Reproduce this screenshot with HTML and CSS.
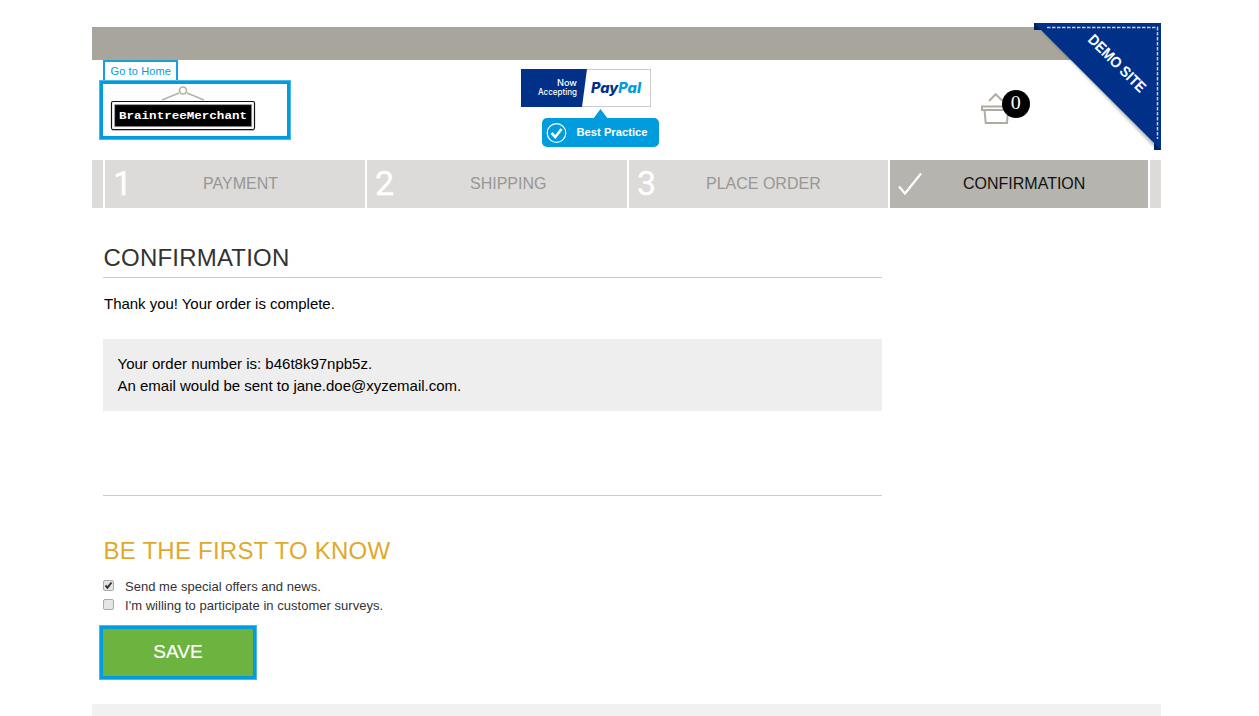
FILE: index.html
```html
<!DOCTYPE html>
<html lang="en">
<head>
<meta charset="utf-8">
<title>Confirmation</title>
<link rel="stylesheet" href="styles.css">
</head>
<body>
<div class="page">
  <div class="topbar"></div>
  <header class="header">
    <div class="brand">
      <a class="home-tag">Go to Home</a>
      <a class="logo">
        <svg width="146" height="47" viewBox="0 0 146 47">
          <g fill="none" stroke="#b3b2aa" stroke-width="1.5"><circle cx="73" cy="5.500" r="3.5" stroke-width="1.7"/><path d="M69 8 52 15M77 8 94 15"/></g>
          <rect x="1.5" y="16.500" width="143" height="28" rx="1.5" fill="#fff" stroke="#111" stroke-width="1.2"/>
          <path d="M2 45.500H144" stroke="#aaa" stroke-width=".8"/>
          <rect x="4.7" y="19.700" width="137" height="22" fill="#000" stroke="#999" stroke-width=".8"/>
          <text x="9" y="33.500" class="logo-text" textLength="128" lengthAdjust="spacingAndGlyphs">BraintreeMerchant</text>
        </svg>
      </a>
    </div>
    <div class="accept">
      <svg width="138" height="80" viewBox="0 0 138 80">
        <rect x=".5" y=".5" width="129" height="37" fill="#fff" stroke="#ccc"/>
        <path d="M0 0H66L61 38H0Z" fill="#003087"/>
        <text x="36" y="17" class="accept-text" textLength="20" lengthAdjust="spacingAndGlyphs">Now</text>
        <text x="17" y="26" class="accept-text" textLength="39" lengthAdjust="spacingAndGlyphs">Accepting</text>
        <text x="70" y="24" class="paypal" textLength="50" lengthAdjust="spacingAndGlyphs"><tspan fill="#003087">Pay</tspan><tspan fill="#009cde">Pal</tspan></text>
        <rect x="21" y="49" width="117" height="29" rx="5" fill="#009cde"/>
        <path d="M72 50 79.5 40 87 50Z" fill="#009cde"/>
        <circle cx="35.5" cy="64" r="9.3" fill="none" stroke="#fff" stroke-width="1.2"/>
        <path d="M30.5 64 34.3 68 40.5 60" fill="none" stroke="#fff" stroke-width="2.6"/>
        <text x="55.5" y="67" class="best" textLength="71" lengthAdjust="spacingAndGlyphs">Best Practice</text>
      </svg>
    </div>
    <div class="cart">
      <svg width="50" height="36" viewBox="0 0 50 36">
        <g fill="none" stroke="#b0aca5" stroke-width="2"><path d="M9 12 15.7 5.2 22 11.500M2 17.5H30V21H2ZM4.5 21 5.7 34H27L28 21"/></g>
        <circle cx="36" cy="15" r="14" fill="#000"/>
        <text x="30.700" y="20" class="count" textLength="10" lengthAdjust="spacingAndGlyphs">0</text>
      </svg>
    </div>
  </header>
  <svg class="ribbon" width="132" height="134" viewBox="0 0 132 134">
    <defs><filter id="soft" x="-10%" y="-10%" width="120%" height="120%"><feGaussianBlur stdDeviation="1.5"/></filter></defs>
    <path d="M9 9 121 125 126 119 20 7Z" fill="#000" opacity=".25" filter="url(#soft)"/>
    <path d="M1 1H10V8H1ZM121 118H128V128H121Z" fill="#00205f"/>
    <path d="M1 1H128V128Z" fill="#003087"/>
    <path d="M14 5.5H124.500V117" fill="none" stroke="#c3cbe0" stroke-width="1.5" stroke-dasharray="3.500 1.500"/>
    <text class="ribbon-text" transform="translate(54 18.500) rotate(45)" textLength="75" lengthAdjust="spacingAndGlyphs">DEMO SITE</text>
  </svg>
  <nav class="steps">
    <div class="edge"></div>
    <div class="step"><b>1</b><span class="s1">PAYMENT</span></div>
    <div class="step"><b>2</b><span class="s2">SHIPPING</span></div>
    <div class="step"><b>3</b><span class="s3">PLACE ORDER</span></div>
    <div class="step active"><svg width="26" height="26" viewBox="0 0 26 26"><path d="M1 14.500 7 21.500 23 1.500" fill="none" stroke="#fff" stroke-width="2.200"/></svg><span class="s4">CONFIRMATION</span></div>
    <div class="edge"></div>
  </nav>
  <main class="content">
    <h1 class="title">CONFIRMATION</h1>
    <p class="thanks">Thank you! Your order is complete.</p>
    <div class="order"><div class="order-no">Your order number is: b46t8k97npb5z.</div><div class="order-mail">An email would be sent to jane.doe@xyzemail.com.</div></div>
    <h2 class="subtitle">BE THE FIRST TO KNOW</h2>
    <div class="option"><span class="box"><svg width="9" height="9" viewBox="0 0 9 9"><path d="M1.500 4.500 3.500 6.700 7.500 1.500" fill="none" stroke="#333" stroke-width="1.900"/></svg></span><span class="o1">Send me special offers and news.</span></div>
    <div class="option"><span class="box"></span><span class="o2">I'm willing to participate in customer surveys.</span></div>
    <div class="save">SAVE</div>
  </main>
  <footer class="footer"></footer>
</div>
</body>
</html>
```
FILE: styles.css
```css
* { box-sizing: border-box; }
body { margin: 0; background: #fff; font-family: "Liberation Sans", Arial, sans-serif; color: #000; overflow: hidden; }
.page { position: relative; width: 1069px; height: 716px; margin-left: 92px; padding-top: 27px; display: flex; flex-direction: column; }
.topbar { height: 33px; background: #a8a59d; }
.header { height: 100px; display: flex; }
.brand { width: 192px; margin-left: 7px; }
.home-tag { display: block; width: 75px; height: 22px; margin-left: 4px; border: 2px solid #1a9fdc; border-bottom: 0; font-size: 11px; letter-spacing: .13px; line-height: 19px; padding-left: 5.500px; color: #009cde; white-space: nowrap; }
.logo { display: block; width: 192px; height: 60px; margin-top: -2px; border: 4px solid #009cde; outline: 1px solid #4db8e6; outline-offset: -1px; padding: 1px 0 0 7px; }
.logo svg { display: block; }
.logo-text { font: bold 10.800px "Liberation Mono", monospace; fill: #fff; }
.accept { margin: 9px 0 0 230px; }
.accept-text { font: 500 8.500px Inter, sans-serif; fill: #fff; }
.paypal { font: italic 800 14.500px Inter, sans-serif; }
.best { font: bold 11px "Liberation Sans", sans-serif; fill: #fff; }
.cart { margin: 29px 0 0 321px; }
.count { font: 18px "Liberation Serif", serif; fill: #fff; }
.ribbon { position: absolute; left: 941px; top: 22px; }
.ribbon-text { font: bold 15px "Liberation Sans", sans-serif; fill: #fff; }
.steps { height: 48px; display: grid; grid-template-columns: 11px 260px 260px 259px 258px 11px; column-gap: 2px; }
.edge, .step { background: #dcdbd9; }
.step { display: flex; color: #989795; font-size: 16px; line-height: 47px; white-space: nowrap; }
.step b { width: 26px; margin-left: 8px; color: #fff; font-family: Roboto, sans-serif; font-size: 34px; font-weight: 400; line-height: 46px; -webkit-text-stroke: .3px #fff; }
.step.active { background: #b5b4ae; color: #111; }
.step svg { margin: 12px 0 0 8px; }
.s1 { margin-left: 64px; }
.s2 { margin-left: 69px; }
.s3 { margin-left: 43px; }
.s4 { margin-left: 39px; }
.content { width: 779px; margin-left: 11px; height: 496px; }
.title { height: 70px; margin: 0; padding: 35px 0 0 .500px; font-size: 24px; letter-spacing: .2px; line-height: 30px; font-weight: 400; color: #333; border-bottom: 1px solid #ccc; }
.thanks { margin: 15px 0 24px; font-size: 15px; letter-spacing: -.03px; line-height: 22px; padding-left: 1px; }
.order { height: 72px; padding: 14px 14px 14px 14.500px; background: #eee; font-size: 15px; line-height: 22px; }
.subtitle { height: 80px; margin: 84px 0 0; padding: 40px 0 0 .500px; border-top: 1px solid #ccc; color: #e0a92e; font-size: 24px; letter-spacing: .23px; line-height: 30px; font-weight: 400; }
.option { display: flex; height: 19px; font-size: 13px; line-height: 24px; color: #333; white-space: nowrap; }
.o1, .o2 { letter-spacing: .03px; }
.box { width: 11px; height: 11px; margin: 5px 11px 0 0; border: 1px solid #aaa; border-radius: 2px; background: #e5e5e5; }
.box svg { display: block; }
.save { width: 158px; height: 55px; margin: 12px 0 0 -4px; border: 4px solid #009cde; outline: 1px solid #4db8e6; outline-offset: -1px; background: #6cb33f; color: #fff; font-size: 19px; line-height: 45px; text-align: center; -webkit-text-stroke: .2px #fff; }
.footer { height: 12px; background: #f1f1f1; }
```
